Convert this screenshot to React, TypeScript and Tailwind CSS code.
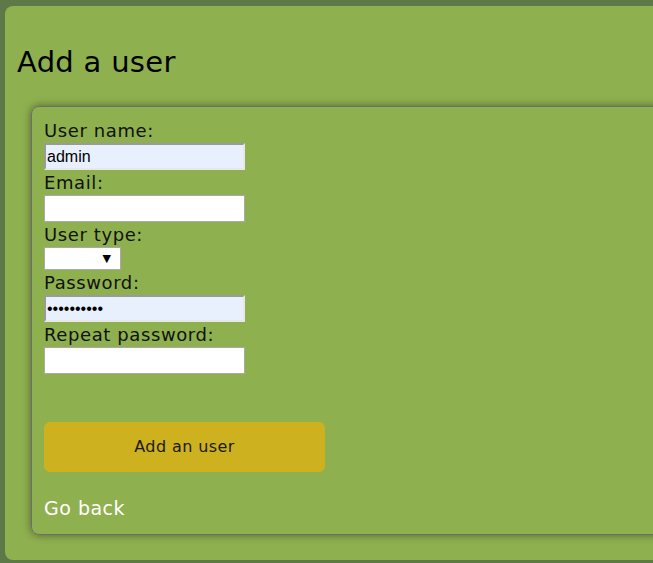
import React from "react";

function Label({ children }: { children: React.ReactNode }) {
  return (
    <div className="h-[25px] leading-[25px] text-[18px] tracking-[0.6px] text-[#111] font-['DejaVu_Sans','Noto_Sans',sans-serif]">
      {children}
    </div>
  );
}

export default function App() {
  return (
    <div className="w-[653px] h-[563px] overflow-hidden bg-[#5e7948] pt-[6px] pl-[5px] font-['DejaVu_Sans','Noto_Sans',sans-serif]">
      <div className="w-[720px] h-[554px] bg-[#8fb04f] rounded-[8px] px-[12px] pt-[38px]">
        <h1 className="text-[29px] leading-[36px] text-black tracking-[0.3px]">Add a user</h1>
        <div className="mt-[26px] ml-[14px] w-[720px] h-[429px] border border-[#6e6e6e] rounded-[8px] shadow-[0_0_8px_rgba(0,0,0,0.45)] pt-[11px] pl-[12px] flex flex-col items-start">
          <Label>User name:</Label>
          <input
            readOnly
            value="admin"
            className="block w-[201px] h-[27px] bg-[#e8f0fe] border-2 border-t-[#9a9a9a] border-l-[#9a9a9a] border-r-[#e8e8e8] border-b-[#e8e8e8] px-[1px] text-[16px] text-black outline-none font-['Liberation_Sans',Arial,sans-serif]"
          />
          <Label>Email:</Label>
          <input readOnly className="block w-[201px] h-[27px] bg-white border border-[#a9a9a9] outline-none" />
          <Label>User type:</Label>
          <div className="w-[77px] h-[23px] bg-white border border-[#a9a9a9] flex items-center justify-end pr-[9px]">
            <span className="text-[11px] leading-none text-black">▼</span>
          </div>
          <Label>Password:</Label>
          <input
            readOnly
            type="password"
            value="1234567890"
            className="block w-[201px] h-[27px] bg-[#e8f0fe] border-2 border-t-[#9a9a9a] border-l-[#9a9a9a] border-r-[#e8e8e8] border-b-[#e8e8e8] px-[1px] text-[16px] text-black outline-none font-['Liberation_Sans',Arial,sans-serif]"
          />
          <Label>Repeat password:</Label>
          <input readOnly className="block w-[201px] h-[27px] bg-white border border-[#a9a9a9] outline-none" />
          <button className="mt-[48px] w-[281px] h-[50px] rounded-[6px] bg-[#cdb11e] text-[16px] tracking-[0.4px] text-[#1a1a1a] flex items-center justify-center">
            Add an user
          </button>
          <div className="mt-[24px] h-[25px] leading-[25px] text-[19px] tracking-[0.5px] text-white">Go back</div>
        </div>
      </div>
    </div>
  );
}
